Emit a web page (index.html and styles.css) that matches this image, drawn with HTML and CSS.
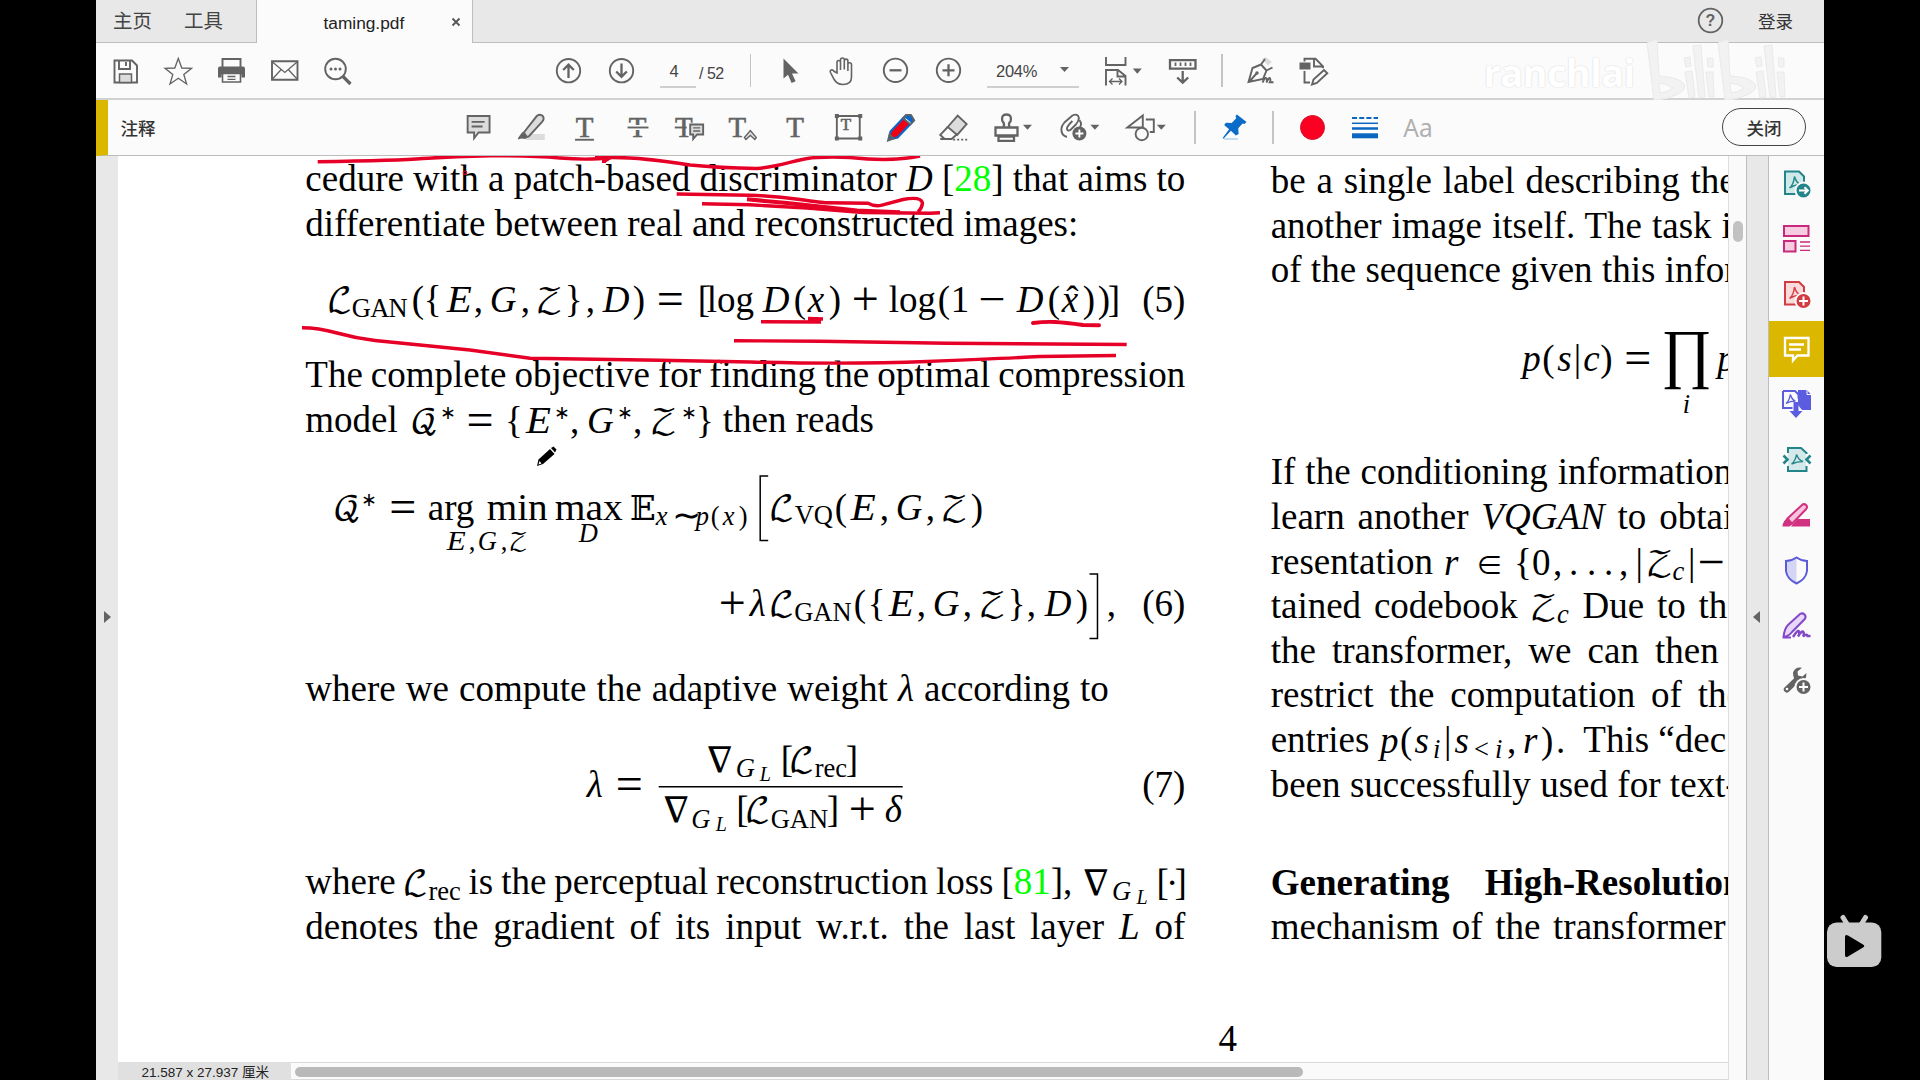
FILE: index.html
```html
<!DOCTYPE html>
<html lang="zh-CN">
<head>
<meta charset="utf-8">
<title>taming.pdf</title>
<link rel="stylesheet" href="styles.css">
</head>
<body>
<div class="window">
  <header class="tabs">
    <div class="tabs-home"><span>主页</span><span>工具</span></div>
    <div class="tab-active"><span class="tab-name">taming.pdf</span>
      <svg class="tab-close" viewBox="0 0 10 10"><path d="M1.5 1.5l7 7M8.5 1.5l-7 7"/></svg></div>
    <div class="tabs-rest">
      <svg class="help" viewBox="0 0 27 27"><circle cx="13.5" cy="13.5" r="11.8"/><text x="13.5" y="19.3">?</text></svg>
      <span class="login">登录</span>
    </div>
  </header>

  <div class="bar bar-main">
    <svg class="ic" viewBox="99.5 43 53 56"><path d="M115 60.5h17.5l5 5v17H115z"/><path class="lt" d="M120 74h12v8.500h-12z"/><path d="M119.500 60.500v8.500h11v-8.500M126.500 62v4"/></svg>
    <svg class="ic" viewBox="152.500 43 53 56"><path class="thin" d="M178.800 58.500l3.500 9.500 9.800.3-7.800 6.200 2.800 9.500-8.300-5.700-8.300 5.700 2.800-9.500-7.800-6.200 9.800-.3z"/></svg>
    <svg class="ic" viewBox="204.500 43 53 56"><path class="fill" d="M217.500 68.500q0-2 2-2h23q2 0 2 2v9h-3.500v-3h-20v3h-3.500z"/><path d="M222 67v-8h18v8"/><path class="wh" d="M222 73.500h18v8.500h-18z"/><path class="thin" d="M227 76.500h8M227 79.300h8"/></svg>
    <svg class="ic" viewBox="258 43 53 56"><path d="M272 61.200h25.500v18.600h-25.500z"/><path class="thin" d="M272.500 62l12.300 10.500 12.300-10.500M272.500 79l8.700-9.500M297 79l-8.700-9.500"/></svg>
    <svg class="ic" viewBox="311 43 53 56"><circle cx="335.500" cy="69" r="10.300"/><path d="M343 76.500l7.500 7.500" stroke-width="3.200"/><circle class="fill" cx="331" cy="69" r="1.500"/><circle class="fill" cx="335.500" cy="69" r="1.500"/><circle class="fill" cx="340" cy="69" r="1.500"/></svg>
    <svg class="ic nav-first" viewBox="542.300 43 53 56"><circle cx="568.800" cy="70.700" r="11.700"/><path class="bold" d="M568.800 78v-13M563.500 70l5.300-5.300 5.300 5.300"/></svg>
    <svg class="ic" viewBox="595.300 43 53 56"><circle cx="621.800" cy="70.700" r="11.700"/><path class="bold" d="M621.800 63.500v13M616.500 71.500l5.300 5.300 5.300-5.300"/></svg>
    <span class="page-field">4</span><span class="page-total">/ 52</span>
    <i class="sep sep-a"></i>
    <svg class="ic cur" viewBox="763 43 53 56"><path class="fill" d="M783.500 58.500v20l4.500-3.800 3.600 8.300 4-1.800-3.600-7.700h6.500z"/></svg>
    <svg class="ic" viewBox="816 43 53 56"><path class="hand" d="M837 73v-10.500q0-2 1.700-2t1.800 2v7.500-10q0-2 1.900-2t1.900 2v9.500-8.500q0-1.900 1.800-1.900t1.800 1.900v10-6.500q0-1.700 1.800-1.700t1.800 1.700v12.500q0 7.500-8.500 7.500-6 0-8.800-5l-3.700-7q-.8-2 .8-2.500 1.500-.5 2.700 1.300z"/></svg>
    <svg class="ic" viewBox="869 43 53 56"><circle cx="895.500" cy="70.300" r="11.700"/><path class="bold" d="M889.500 70.300h12"/></svg>
    <svg class="ic" viewBox="921.500 43 53 56"><circle cx="948" cy="70.300" r="11.700"/><path class="bold" d="M942 70.300h12M948 64.300v12"/></svg>
    <div class="zoom-field"><span>204%</span><svg class="caret" viewBox="0 0 9 5"><path d="M0 0h9l-4.500 5z"/></svg></div>
    <svg class="ic fit" viewBox="1094 43 53 56"><path d="M1106 57v8h19.500v-8M1106 85.500v-15.500h12l7.500 6v9.500M1117.500 70v6.500h8"/><path class="thin" d="M1109.500 81.500h12.500M1112.500 78.500l-3 3 3 3M1119 78.500l3 3-3 3"/><path class="fill" d="M1132.800 68.500h9l-4.500 5.200z"/></svg>
    <svg class="ic rul" viewBox="1156.500 43 53 56"><path class="bold" d="M1170.500 60.200h25.500v8.500h-25.500z"/><path d="M1176 62.500v3.500M1181 62.500v3.500M1186 62.500v3.500M1191 62.500v3.500" stroke-width="1.800"/><path class="bold" d="M1183.200 71v11.500M1177.700 77.500l5.500 5.200 5.500-5.200"/></svg>
    <i class="sep sep-b"></i>
    <svg class="ic sgn" viewBox="1234 43 53 56"><path class="ltf" d="M1262 59l6 6.500 4-3.500-6.500-5z"/><path d="M1248.500 82l4-14 8.500-3.500 5.500 6-3.500 8.500zM1261 64.500l4-5.500M1266.500 70.500l6-3M1249 82l7.500-8.500"/><circle class="fill" cx="1257" cy="73" r="1.700"/><path d="M1262.500 82.500q3-6.500 4-4t-.2 4q3-6 3.800-4t-.3 3.800h3.700"/></svg>
    <svg class="ic" viewBox="1287 43 53 56"><path class="fill" d="M1299.500 62.500h11v7h-11z"/><path d="M1304.500 61.500v-2.700h11l7.500 7.500v2M1314 59v7.500h8.500M1304.500 71v11.500h5.500"/><path d="M1312 84.500l1.500-5 10.500-9.500 3.300 3.200-10.500 9.700z"/></svg>
    <div class="watermark"><span class="wm-name">ranchlai</span>
      <svg class="wm-logo" viewBox="1646 34 146 66"><path d="M1649 40l10-4 2 37q20 1 25 8 3 5-6 10-11 6-24 6zM1661 80l1 10q8-1 13-5-5-4-14-5zM1720 40l10-4 2 37q20 1 25 8 3 5-6 10-11 6-24 6zM1732 80l1 10q8-1 13-5-5-4-14-5z" fill-rule="evenodd"/><path d="M1687 69l7-1 3 26-6 1zM1695 43l8-1 4 52-6 1zM1708 69l7 0 1 25-5 0zM1758 69l7-1 3 26-6 1zM1766 43l8-1 4 52-6 1zM1779 69l7 0 1 25-5 0zM1686 55l6-1 1 9-5 1zM1709 55l6 0 0 9-5 0zM1757 55l6-1 1 9-5 1zM1780 55l6 0 0 9-5 0z"/></svg>
    </div>
  </div>

  <div class="bar bar-notes">
    <span class="notes-title">注释</span>
    <svg class="ic note-first" viewBox="452.300 100 53 55"><path class="ltb" d="M468 116h22v16.500h-11l-4.500 5.800v-5.800h-6.500z"/><path d="M472 121.800h13M472 126.500h11"/></svg>
    <svg class="ic" viewBox="505.100 100 53 55"><path class="ltf" d="M528 134h17v6h-19z"/><path class="ltb" d="M524 132.500l13-16.500q3.500-2.500 6 0 2 2.500-.5 5.500l-13.500 15-2 .5z"/><path class="fill" d="M522.500 132l5 5.500-2 1.500-4-.5-3.500 1 .5-2z"/></svg>
    <svg class="ic" viewBox="557.900 100 53 55"><text class="tee" x="584.500" y="137.200">T</text><path d="M575 139.800h19"/></svg>
    <svg class="ic" viewBox="610.900 100 53 55"><text class="tee" x="637.700" y="137.200">T</text><path class="gap" d="M627 127.500h21"/><path d="M627.500 127.500h21"/></svg>
    <svg class="ic" viewBox="663.700 100 53 55"><text class="tee" x="684.500" y="137.200">T</text><path d="M675.500 127.500h12"/><path class="ltb halo" d="M691 124.500h13v10h-6l-4 4.500v-4.500h-3z"/><path class="thin" d="M694 127.800h7M694 131h7"/></svg>
    <svg class="ic" viewBox="716.500 100 53 55"><text class="tee" x="738" y="137.200">T</text><path class="ltb thin" d="M745 137.500l6-7 6 7-1.500 2-4.500-4-4.500 4z"/></svg>
    <svg class="ic" viewBox="769.300 100 53 55"><text class="tee" x="795.500" y="137.200">T</text></svg>
    <svg class="ic" viewBox="822.100 100 53 55"><path d="M837 116h23v22.500h-23z"/><text class="tee tee-s" x="846" y="130.500">T</text><path class="fill" d="M835 114h4v4h-4zM858.500 114h4v4h-4zM835 136.500h4v4h-4zM858.500 136.500h4v4h-4z"/></svg>
    <svg class="ic" viewBox="874.900 100 53 55"><path d="M889 139.500l1.500-8 15.500-16.200 7 6-15.500 16.200z" fill="#f00014" stroke="#0a66c8" stroke-width="2.200"/><path d="M888 140.500l1.500-6 4 4zM903 118l7.300 6.500 4-4.200-3.300-5.500h-4z" fill="#0a66c8"/><path d="M905.500 118.500l5 4.200" stroke="#fff" stroke-width="1"/></svg>
    <svg class="ic" viewBox="927.700 100 53 55"><path class="ltb" d="M948.500 127l10-11.500 9 8.500-9.500 11z"/><path d="M948.500 127l-7.500 8 4.500 4h7l5.500-5M941 139h12"/><path d="M954 139.700h14" stroke-dasharray="2 2"/></svg>
    <svg class="ic stamp" viewBox="980.500 100 60.600 55"><path class="bold" d="M996 127.500h22v8h-22zM999 136.500h15.500v4.300h-15.500z"/><path class="bold" d="M1004 127q1.500-3.500-1.200-6-1.300-6.500 4.200-6.500t4.200 6.500q-2.700 2.500-1.200 6"/><path class="fill" d="M1023.500 124.800h9l-4.500 5z"/></svg>
    <svg class="ic wide" viewBox="1041.100 100 66.600 55"><path d="M1067 137q-6-2-5.500-8 0-3 3-6.500l8-7q5.500-2.500 6.500 2.500 0 3-3 6.500l-5.500 5.500q-3 1.500-3.500-1.500 0-2 5.500-7.500M1079.500 120q3 4 .5 7"/><circle class="fill" cx="1079.500" cy="133.500" r="7"/><path d="M1075.500 133.500h8M1079.500 129.500v8" stroke="#fff"/><path class="fill" d="M1090.500 124.800h9l-4.500 5z"/></svg>
    <svg class="ic wide" viewBox="1107.700 100 66.600 55"><path d="M1143.500 115.500v12h-15.500zM1146.500 119.500h8v12.500h-4"/><circle cx="1142.500" cy="134" r="6.200" fill="#fbfbfb"/><path class="fill" d="M1157.500 124.800h9l-4.500 5z"/></svg>
    <i class="sep sep-c"></i>
    <svg class="ic pin" viewBox="1207 100 53 55"><path d="M1223 139h14" stroke="#c4dcf0" stroke-width="2"/><path d="M1236 114.500l9.700 7.500-2.200 2-1.800-.5-4.300 4.800.3 5.700-2.700 1.500-5-4.700-7.500 8-.8-.8 6.500-8.700-5-4.300 1.800-2.300 5.800.2 4.500-4.700-.7-2.200z" fill="#0a6cc8" stroke="none"/></svg>
    <i class="sep sep-d"></i>
    <i class="swatch"></i>
    <svg class="weights" viewBox="0 0 26 23"><path d="M0 2h26" stroke-dasharray="5 2.200" stroke-width="2"/><path d="M0 7.300h26" stroke-width="1.500"/><path d="M0 12.500h26" stroke-width="2.500"/><path d="M0 19.800h26" stroke-width="5"/></svg>
    <span class="aa">Aa</span>
    <span class="close-btn">关闭</span>
  </div>

  <main class="work">
    <div class="gutter-left"><svg viewBox="0 0 7 12"><path d="M0 0l7 6-7 6z"/></svg></div>
    <section class="doc">
      <article class="page">
        <div class="cols">
          <div class="col">
            <p class="line tight">cedure with a patch-based discriminator <i>D</i> [<span class="cite">28</span>] that aims to</p>
            <p class="line w773">differentiate between real and reconstructed images:</p>
            <svg class="eq h5" viewBox="305.300 245.200 880 106.800">
              <text y="311"><tspan class="s" x="327">ℒ</tspan><tspan class="sub" x="352" y="316" textLength="56">GAN</tspan><tspan x="412" y="311">(</tspan><tspan x="424">{</tspan><tspan class="i" x="447" textLength="25" lengthAdjust="spacingAndGlyphs">E</tspan><tspan x="474">,</tspan><tspan class="i" x="490">G</tspan><tspan x="521">,</tspan><tspan class="s" x="536">𝒵</tspan><tspan x="565">}</tspan><tspan x="586">,</tspan><tspan class="i" x="603">D</tspan><tspan x="633">)</tspan><tspan class="op" x="657">=</tspan><tspan x="698">[</tspan><tspan x="707">log</tspan><tspan class="i" x="763">D</tspan><tspan x="794">(</tspan><tspan class="i" x="808">x</tspan><tspan x="829">)</tspan><tspan class="op" x="852">+</tspan><tspan x="889">log</tspan><tspan x="938">(</tspan><tspan x="951">1</tspan><tspan class="op" x="978.500">−</tspan><tspan class="i" x="1017">D</tspan><tspan x="1048">(</tspan><tspan class="i" x="1062">x</tspan><tspan x="1066.500">ˆ</tspan><tspan x="1083">)</tspan><tspan x="1098">)</tspan><tspan x="1108">]</tspan><tspan x="1142.500">(5)</tspan></text>
            </svg>
            <p class="line tight">The complete objective for finding the optimal compression</p>
            <p class="line nat">model<svg class="im" width="325" height="44" viewBox="397 396.600 325 44"><text y="431.500"><tspan class="s" x="409">𝒬</tspan><tspan class="st" x="438.500">∗</tspan><tspan class="op" x="465.500">=</tspan><tspan x="504">{</tspan><tspan class="i" x="525" textLength="25" lengthAdjust="spacingAndGlyphs">E</tspan><tspan class="st" x="553">∗</tspan><tspan x="569">,</tspan><tspan class="i" x="586">G</tspan><tspan class="st" x="616">∗</tspan><tspan x="632">,</tspan><tspan class="s" x="649">𝒵</tspan><tspan class="st" x="679.500">∗</tspan><tspan x="695">}</tspan></text></svg>then reads</p>
            <svg class="eq h6" viewBox="305.300 441.200 880 224.700">
              <text y="519"><tspan class="s" x="333">𝒬</tspan><tspan class="st" x="361.500">∗</tspan><tspan class="op" x="389.500">=</tspan><tspan x="428">arg</tspan><tspan x="487" textLength="61" lengthAdjust="spacingAndGlyphs">min</tspan><tspan x="555" textLength="68" lengthAdjust="spacingAndGlyphs">max</tspan><tspan class="bb" x="629">𝔼</tspan><tspan class="i sm" x="656" y="524">x</tspan><tspan class="til" x="672.500">∼</tspan><tspan class="i sm" x="696">p</tspan><tspan class="sm" x="711">(</tspan><tspan class="i sm" x="723">x</tspan><tspan class="sm" x="739">)</tspan><tspan class="s" x="769" y="519">ℒ</tspan><tspan class="sub" x="795" y="523.500">VQ</tspan><tspan x="835" y="519">(</tspan><tspan class="i" x="851" textLength="25" lengthAdjust="spacingAndGlyphs">E</tspan><tspan x="880">,</tspan><tspan class="i" x="896">G</tspan><tspan x="926">,</tspan><tspan class="s" x="941">𝒵</tspan><tspan x="971">)</tspan></text>
              <text class="sm" y="549.500"><tspan class="i" x="447" textLength="19" lengthAdjust="spacingAndGlyphs">E</tspan><tspan x="469">,</tspan><tspan class="i" x="478">G</tspan><tspan x="501">,</tspan><tspan class="s sz" x="509">𝒵</tspan><tspan class="i" x="579" y="541.700">D</tspan></text>
              <path class="rule" d="M768.500 475.200h-8v64.600h8M1089.800 573.200h8v64.600h-8"/>
              <text y="614.800"><tspan class="op" x="719">+</tspan><tspan class="i" x="750">λ</tspan><tspan class="s" x="769">ℒ</tspan><tspan class="sub" x="794.500" y="620.500">GAN</tspan><tspan x="854" y="614.800">(</tspan><tspan x="868">{</tspan><tspan class="i" x="889" textLength="25" lengthAdjust="spacingAndGlyphs">E</tspan><tspan x="917">,</tspan><tspan class="i" x="933">G</tspan><tspan x="963">,</tspan><tspan class="s" x="979">𝒵</tspan><tspan x="1008">}</tspan><tspan x="1027">,</tspan><tspan class="i" x="1045">D</tspan><tspan x="1076">)</tspan><tspan x="1107">,</tspan><tspan x="1142.500">(6)</tspan></text>
            </svg>
            <p class="line w803">where we compute the adaptive weight <i>λ</i> according to</p>
            <svg class="eq h7" viewBox="305.300 710.500 880 149">
              <text y="796.500"><tspan class="i" x="587">λ</tspan><tspan class="op" x="616">=</tspan><tspan x="1142.500">(7)</tspan></text>
              <text y="771.500"><tspan class="nab" x="704">∇</tspan><tspan class="i sm" x="736" y="776.700">G</tspan><tspan class="i ss" x="760" y="780">L</tspan><tspan x="781" y="771.500">[</tspan><tspan class="s" x="789">ℒ</tspan><tspan class="sub" x="815" y="776.700">rec</tspan><tspan x="846" y="771.500">]</tspan></text>
              <path class="rule" d="M659 786.200h244" stroke-width="2"/>
              <text y="821.700"><tspan class="nab" x="660.500">∇</tspan><tspan class="i sm" x="691.500" y="827">G</tspan><tspan class="i ss" x="716" y="830.500">L</tspan><tspan x="736.500" y="821.700">[</tspan><tspan class="s" x="745">ℒ</tspan><tspan class="sub" x="771" y="827">GAN</tspan><tspan x="827" y="821.700">]</tspan><tspan class="op" x="849">+</tspan><tspan class="i" x="885">δ</tspan></text>
            </svg>
            <p class="line tight">where <svg class="im" width="57" height="44" viewBox="404 859.500 57 44"><text y="894.300"><tspan class="s" x="402.500">ℒ</tspan><tspan class="sub" x="428.500" y="899.500">rec</tspan></text></svg> is the perceptual reconstruction loss [<span class="cite">81</span>], <svg class="im" width="105" height="44" viewBox="1080 859.500 105 44"><text y="894.300"><tspan class="nab" x="1080">∇</tspan><tspan class="i sm" x="1112" y="899.500">G</tspan><tspan class="i ss" x="1136.500" y="903">L</tspan><tspan x="1156.500" y="894.300">[</tspan><tspan x="1166">·</tspan><tspan x="1174.500">]</tspan></text></svg></p>
            <p class="line">denotes the gradient of its input w.r.t. the last layer <i>L</i> of</p>
          </div>
          <div class="col col-right">
            <p class="line w465">be a single label describing the</p>
            <p class="line w475">another image itself. The task is</p>
            <p class="line w466">of the sequence given this infor</p>
            <svg class="eq h8" viewBox="1270.700 291.500 880 157.700">
              <text y="369.700"><tspan class="i" x="1522">p</tspan><tspan x="1542">(</tspan><tspan class="i" x="1557">s</tspan><tspan x="1573.500">|</tspan><tspan class="i" x="1583">c</tspan><tspan x="1600">)</tspan><tspan class="op" x="1624">=</tspan><tspan class="i" x="1717">p</tspan></text>
              <text class="prod" x="1661" y="374" textLength="50.500" lengthAdjust="spacingAndGlyphs">∏</text>
              <text class="i sm" x="1682.500" y="412">i</text>
            </svg>
            <p class="line w461">If the conditioning information</p>
            <p class="line w481">learn another <i>VQGAN</i> to obtain</p>
            <p class="line nat">resentation<svg class="im" width="290" height="44" viewBox="1434 538.500 290 44"><text y="573.300"><tspan class="i" x="1445">r</tspan><tspan class="in" x="1477">∈</tspan><tspan x="1515">{</tspan><tspan x="1533">0</tspan><tspan x="1554">,</tspan><tspan x="1570">.</tspan><tspan x="1588">.</tspan><tspan x="1605">.</tspan><tspan x="1620">,</tspan><tspan x="1636.500">|</tspan><tspan class="s" x="1647">𝒵</tspan><tspan class="i sm" x="1673.500" y="578.500">c</tspan><tspan x="1689" y="573.300">|</tspan><tspan class="op" x="1698.500">−</tspan></text></svg></p>
            <p class="line w473">tained codebook <svg class="im" width="39" height="44" viewBox="1531 583.100 39 44"><text y="617.700"><tspan class="s" x="1530">𝒵</tspan><tspan class="i sm" x="1557" y="622.500">c</tspan></text></svg> Due to the</p>
            <p class="line w448">the transformer, we can then</p>
            <p class="line w472">restrict the computation of the</p>
            <p class="line nat">entries<svg class="im" width="214" height="44" viewBox="1370 716.800 214 44"><text y="751.700"><tspan class="i" x="1381">p</tspan><tspan x="1401">(</tspan><tspan class="i" x="1415.500">s</tspan><tspan class="i sm" x="1434" y="757">i</tspan><tspan x="1445" y="751.700">|</tspan><tspan class="i" x="1455.500">s</tspan><tspan class="sm lts" x="1475" y="757">&lt;</tspan><tspan class="i sm" x="1496">i</tspan><tspan x="1508" y="751.700">,</tspan><tspan class="i" x="1524">r</tspan><tspan x="1542">)</tspan><tspan x="1557">.</tspan></text></svg>This “dec</p>
            <p class="line w468">been successfully used for text-</p>
            <p class="line w473 heading">Generating High-Resolution</p>
            <p class="line w455">mechanism of the transformer</p>
          </div>
        </div>
        <p class="folio">4</p>
        <svg class="ink" viewBox="118 156 1610 906">
          <path d="M317.700 161.700Q400 160.500 423 158.500C460 156 520 154 560 158Q590 160.500 610 157.500 640 157 690 165 720 168 757 168.500C785 166 798 158 817 157.500Q832 156.500 850 157.500 892 162 920 156"/>
          <path d="M595 157.500h15l-6 3.500v2" stroke-width="4"/>
          <path d="M676.700 194L750 195.300Q775 196 800 199.500T827 202.700L868 203.300Q875 207 882 205.200L903 199.500Q921 196 922.500 203 922 208 918 212"/>
          <path d="M702 203.700L750 204.800 807 208 863 212.500 930 213.300 940 212.800"/>
          <path d="M747 199.300L787 203 857 210.500 900 212.300" stroke-width="4"/>
          <path d="M761 321.700L821 322M808 318.500L823 319"/>
          <path d="M1033 323Q1045 321.500 1055 322T1083 325L1099 325.200" stroke-width="4" stroke-linecap="round"/>
          <path d="M734 340.700L820 341.200 947 343.200 1126.700 344.500"/>
          <path d="M302 327.700Q318 327.700 337 333T375 340.500L470 350 530 358.300 660 360.200 750 362Q850 364.500 927 361.500T1040 356.500L1116 355.500"/>
          <circle cx="465" cy="172.700" r=".6"/>
          <g class="pencil"><path d="M537 466l1.500-6.500 11.500-10.500 4.500 5-11.500 10z"/><path d="M551 448l2.500-1.500 3 3-1.500 3z"/><path d="M538.500 464.500l1-3.500 2 2.500z" fill="#fff"/></g>
        </svg>
      </article>
      <div class="status"><span class="size">21.587 x 27.937 厘米</span><div class="hscroll"><i></i></div></div>
    </section>
    <div class="vscroll"><i></i></div>
    <div class="gutter-right"><svg viewBox="0 0 7 12"><path d="M7 0L0 6l7 6z"/></svg></div>
    <aside class="tools">
      <svg class="tl" viewBox="1769 156 55 55"><g stroke="#23848a" fill="#cfe8e8"><path d="M1785 171.500h14l5 5v17.500h-19z"/><path class="pdf" d="M1789.500 188q4-3 5-11.500 2 7 6.500 8-6 0-11.500 3.500"/></g><circle cx="1803.500" cy="190.500" r="8" fill="#23848a" stroke="#fafafa"/><path d="M1799 190.500h8.500M1804.500 187.300l3.300 3.200-3.300 3.200" stroke="#fff"/></svg>
      <svg class="tl" viewBox="1769 211 55 55"><path d="M1784 226h24.500v10h-24.500zM1784 241h11.500v10.500h-11.500z" stroke="#c9297c" fill="#f5cce0"/><path d="M1800 242h10M1800 246.200h10M1800 250.300h10" stroke="#c9297c" stroke-width="1.300"/></svg>
      <svg class="tl" viewBox="1769 266 55 55"><g stroke="#d23b42" fill="#fadadb"><path d="M1785 282h14l5 5v17.500h-19z"/><path class="pdf" d="M1789.500 298.500q4-3 5-11.500 2 7 6.500 8-6 0-11.500 3.500"/></g><circle cx="1803.500" cy="301" r="8" fill="#d23b42" stroke="#fafafa"/><path d="M1799 301h9M1803.500 296.500v9" stroke="#fff"/></svg>
      <svg class="tl on" viewBox="1769 321 55 56"><path d="M1785 338h23.500v17.500h-11l-4.500 5v-5h-8z"/><path d="M1789 344.500h15M1789 349.500h12"/></svg>
      <svg class="tl" viewBox="1769 377 55 55"><path d="M1798 390h9l4 4.500v15.500h-9l-4-5z" fill="#5c5ce0"/><path d="M1807 390v4.500h4" stroke="#fafafa" stroke-width="1"/><path d="M1783 391h12l3.500 3.500v4M1783 391v17h9.500" stroke="#5c5ce0"/><path class="pdf" d="M1786 403.500q3.500-3 4.300-9 1.500 5 5 6.500-5 0-9.300 2.500" stroke="#5c5ce0"/><path d="M1793.500 402h5v9h4l-6.500 7-6.500-7h4z" fill="#5c5ce0"/></svg>
      <svg class="tl" viewBox="1769 432 55 55"><path d="M1788 449h13l5 5v16h-18z" fill="#d4e9e9"/><path d="M1788 453v-5h13l5.500 5v1M1788 466v5h18.500v-5" stroke="#23848a"/><path class="pdf" d="M1791.500 464q4-3 5-9.500 2 5.500 6.500 7-6 0-11.500 2.500" stroke="#23848a"/><path d="M1783.500 455.500l4 4-4 4M1810.500 455.500l-4 4 4 4" stroke="#23848a" stroke-width="2.600"/></svg>
      <svg class="tl" viewBox="1769 487 55 55"><path d="M1797.500 519h12.500v7.500h-19zM1786.500 518.500l5.500 6-2.500 2h-7q0-4 4-8z" fill="#d12f7f"/><path d="M1787.500 518.500l15-14q2-1 3.800.7 1.500 2-.3 4l-14 14.500z" stroke="#d12f7f" fill="#f6c4dc"/></svg>
      <svg class="tl" viewBox="1769 542 55 55"><path d="M1796.500 557.500q-5 3.500-10.500 3.500v10q1 8 10.500 12.500z" fill="#d4d5f5"/><path d="M1796.500 557.500q5 3.500 10.500 3.500v10q-1 8-10.500 12.500-9.500-4.500-10.500-12.500v-10q5.500 0 10.500-3.500z" stroke="#5c5cd8"/></svg>
      <svg class="tl" viewBox="1769 597 55 55"><path d="M1783.500 637q1-9 5-12.500l11.500-10.500q2.500-1.500 4.500.5t.3 4.500l-12.800 13q-3 4-8.500 5zM1783 637.500h8" stroke="#8148c8" fill="#e8d8f8"/><path d="M1793 637q5-8 6-5.500t-1 5q4-6.500 5.300-4.500t-.3 4.500q4-3.500 4.500-.5h3" stroke="#8148c8" stroke-width="2.400"/></svg>
      <svg class="tl" viewBox="1769 652 55 55"><path d="M1786.800 689.500l10.500-10" stroke="#636363" stroke-width="6" stroke-linecap="round"/><path d="M1802 667.800q-6.500-1.500-9 4.700-.5 9 7.500 9 6 0 6-8.500l-4 3.500-4.500-1-.5-4z" fill="#636363"/><circle cx="1787" cy="689" r="1.300" fill="#fff"/><circle cx="1803.500" cy="687" r="8" fill="#636363" stroke="#fafafa"/><path d="M1799 687h9M1803.500 682.500v9" stroke="#fff"/></svg>
    </aside>
  </main>
</div>
<svg class="player" viewBox="1826 914 57 54"><path d="M1843 917.500l5 8M1865.500 917.500l-5 8" stroke="#ccc" stroke-width="5" stroke-linecap="round"/><rect x="1827" y="922.500" width="54.300" height="44.500" rx="9.500" fill="#ccc"/><path d="M1845 937q0-3 3-1.500l15 9q2.500 1.500 0 3l-15 9q-3 1.500-3-1.500z" fill="#000"/></svg>
</body>
</html>
```
FILE: styles.css
```css
* { box-sizing: border-box; }
body { margin: 0; width: 1920px; height: 1080px; overflow: hidden; background: #000; font-family: "Liberation Sans", "Noto Sans CJK SC", sans-serif; color: #333; }
svg { display: block; flex: none; }
p { margin: 0; }
.window { margin-left: 96px; width: 1728px; height: 1080px; display: flex; flex-direction: column; background: #fbfbfb; }

/* tab strip */
.tabs { display: flex; flex: none; height: 43px; }
.tabs-home { width: 160.500px; padding: 0 0 3px 17px; display: flex; align-items: center; gap: 32px; font-size: 19.500px; background: #e8e8e8; border-right: 1px solid #bdbdbd; border-bottom: 1px solid #bdbdbd; color: #444; }
.tab-active { width: 215.500px; display: flex; align-items: center; padding: 3px 0 0 67px; font-size: 17.300px; color: #222; }
.tab-close { width: 10px; height: 10px; margin-left: 47px; margin-bottom: 3px; fill: none; stroke: #555; stroke-width: 1.800; }
.tabs-rest { flex: 1; display: flex; align-items: center; justify-content: flex-end; padding: 0 31px 2px 0; background: #e8e8e8; border-left: 1px solid #bdbdbd; border-bottom: 1px solid #bdbdbd; }
.help { width: 27px; height: 27px; fill: none; stroke: #636363; stroke-width: 1.800; }
.help text { font: bold 16px "Liberation Sans", sans-serif; text-anchor: middle; fill: #636363; stroke: none; }
.login { margin-left: 34px; font-size: 17.500px; color: #333; }

/* toolbars */
.bar { display: flex; flex: none; align-items: center; background: #fbfbfb; }
.bar-main { height: 57px; padding-left: 2.500px; border-bottom: 2px solid #d2d2d2; }
.bar-notes { height: 55.500px; border-left: 12px solid #dcb700; border-bottom: 1px solid #bdbdbd; }
.ic { width: 53px; height: 56px; fill: none; stroke: #636363; stroke-width: 1.900; }
.bar-main .ic { margin-top: 1px; }
.bar-notes .ic { width: 52.800px; height: 55px; }
.bar-notes .stamp { width: 60.600px; }
.bar-notes .wide { width: 66.600px; }
.fill { fill: #636363; stroke: none; }
.thin { stroke-width: 1.300; }
.bold { stroke-width: 2.300; }
.lt, .ltb { fill: #dcdcdc; }
.lt { stroke-width: 1.500; }
.ltf { fill: #dcdcdc; stroke: none; }
.wh { fill: #fbfbfb; stroke-width: 1.600; }
.hand { stroke-width: 1.600; fill: #fbfbfb; }
.gap { stroke: #fbfbfb; stroke-width: 5; }
.tee { font: 29px "Liberation Serif", serif; text-anchor: middle; fill: #636363; stroke: #636363; stroke-width: .6; }
.tee-s { font-size: 17px; }
.nav-first { margin-left: 178.500px; }
.page-field { width: 36px; height: 34px; margin: 0 4px 0 12px; padding: 8px 8px 0 0; border-bottom: 2px solid #cfcfcf; font-size: 16.500px; text-align: center; color: #444; }
.page-total { width: 28px; font-size: 16px; padding-top: 6px; white-space: nowrap; color: #444; letter-spacing: -.5px; text-indent: -1px; }
.sep { flex: none; width: 1.500px; height: 33px; background: #c4c4c4; }
.sep-a { margin-left: 21.500px; }
.cur { margin-left: 12px; }
.zoom-field { width: 91.500px; height: 34px; margin-left: 12px; padding: 8px 10px 4px 9px; display: flex; align-items: center; justify-content: space-between; border-bottom: 2px solid #cfcfcf; font-size: 16.500px; color: #444; letter-spacing: -.3px; }
.caret { width: 9px; height: 5px; margin-bottom: 4px; fill: #636363; }
.fit { margin-left: 15px; }
.rul { margin-left: 9.500px; }
.sep-b { margin-left: 12px; }
.sgn { margin-left: 11px; }
.watermark { display: flex; align-items: center; margin-left: 144px; }
.wm-name { width: 152px; font: bold 38px "Open Sans", "Noto Sans", sans-serif; letter-spacing: -.6px; color: #fff; text-shadow: 0 0 1.500px #ccc; padding-top: 3px; }
.wm-logo { width: 146px; height: 66px; margin: -10px 0 -8px 8px; fill: #f2f2f2; stroke: #eaeaea; stroke-width: 1; }
.notes-title { width: 344.300px; padding-left: 12.500px; font-size: 17.500px; font-weight: 500; color: #333; }
.sep-c { margin-left: 20px; }
.pin { margin-left: 12px; }
.sep-d { margin-left: 12px; }
.swatch { width: 25.500px; height: 25.500px; margin-left: 26px; border-radius: 50%; background: #fa0023; border: 1px solid #d8102a; }
.weights { width: 26px; height: 23px; margin-left: 27px; fill: none; stroke: #0a66c0; }
.aa { margin-left: 25px; font: 24.500px "Noto Sans", sans-serif; color: #b0b0b0; }
.close-btn { width: 84px; height: 38px; margin-left: auto; margin-right: 18px; border: 1.500px solid #444; border-radius: 19px; display: flex; align-items: center; justify-content: center; font-size: 17.500px; font-weight: 500; color: #333; }

/* work area */
.work { flex: 1; display: flex; min-height: 0; }
.gutter-left { width: 22px; background: #e8e8e8; padding: 455px 0 0 8px; }
.gutter-left svg, .gutter-right svg { width: 7px; height: 12px; fill: #636363; }
.doc { width: 1610px; display: flex; flex-direction: column; }
.page { position: relative; height: 906.500px; padding-top: 1.500px; overflow: hidden; background: #fff; color: #000; font: 37px/44.600px "Liberation Serif", serif; }
.cols { display: flex; gap: 85.400px; padding-left: 187.300px; width: 2100px; }
.col { flex: none; width: 880px; height: 792.800px; }
.col-right { padding-top: 2px; }
.line { height: 44.600px; text-align: justify; text-align-last: justify; }
.tight { word-spacing: -4px; }
.nat { text-align-last: left; white-space: nowrap; }
.cite { color: #0f0; }
.w448 { width: 448px; } .w455 { width: 455px; } .w461 { width: 461.700px; } .w465 { width: 465px; }
.w466 { width: 466px; } .w468 { width: 467px; } .w472 { width: 472.300px; } .w473 { width: 473px; }
.w475 { width: 475.500px; } .w481 { width: 481px; } .w773 { width: 773px; } .w803 { width: 803.500px; }
.heading { font-weight: bold; margin-top: 53.500px; }
.folio { margin-top: 66.800px; padding-left: 1100.500px; }

/* mathematics */
.eq { width: 880px; overflow: visible; }
.h5 { height: 106.800px; } .h6 { height: 224.700px; } .h7 { height: 149px; } .h8 { height: 157.700px; }
.im { display: inline-block; vertical-align: top; overflow: visible; }
.page text { font-family: "Liberation Serif", serif; font-size: 37px; fill: #000; word-spacing: 0; }
.page .i { font-style: italic; }
.page .s { font-family: "DejaVu Math TeX Gyre", "DejaVu Serif", serif; font-size: 34px; }
.page .bb { font-family: "DejaVu Math TeX Gyre", "DejaVu Sans", serif; font-size: 34px; }
.page .sm, .page .sub { font-size: 26.500px; }
.page .sz { font-size: 24px; }
.page .ss { font-size: 20px; }
.page .st { font-size: 19px; baseline-shift: 14px; }
.page .op { font-size: 48px; baseline-shift: -3px; }
.page .til { font-size: 35px; baseline-shift: -2px; }
.page .in { font-size: 27px; }
.page .nab { font-family: "DejaVu Math TeX Gyre", "DejaVu Sans", sans-serif; font-size: 36px; }
.page .prod { font-size: 66px; }
.rule { fill: none; stroke: #000; stroke-width: 1.500; }

/* pen annotations lie over the page */
.ink { position: absolute; left: 0; top: 0; width: 1610px; height: 906px; fill: none; stroke: #e60027; stroke-width: 3.400; }
.pencil { fill: #000; stroke: none; }

.status { flex: 1; display: flex; }
.size { width: 173px; padding: 3px 0 0 23.500px; background: #e0e0e0; color: #222; font-size: 13.500px; line-height: 15px; white-space: nowrap; }
.hscroll { flex: 1; padding: 4px 0 0 4px; border-top: 1px solid #dadada; border-bottom: 1px solid #dadada; background: #fafafa; }
.hscroll i { display: block; width: 1008px; height: 10px; border-radius: 5px; background: #b9b9b9; }
.vscroll { width: 18px; border-left: 1px solid #dedede; background: #fafafa; padding: 65px 0 0 4px; }
.vscroll i { display: block; width: 10px; height: 21px; border-radius: 5px; background: #c2c2c2; }
.gutter-right { width: 23px; background: #e8e8e8; border-left: 1.500px solid #bdbdbd; border-right: 1.500px solid #bdbdbd; padding: 455px 0 0 6px; }
.tools { width: 55px; background: #fafafa; }
.tl { width: 55px; height: 55px; fill: none; stroke-width: 2; }
.pdf { fill: none; stroke-width: 1.400; }
.on { height: 56px; background: #dcb700; stroke: #fff; stroke-width: 2.300; }

.player { position: absolute; left: 1826px; top: 914px; width: 57px; height: 54px; }
```
